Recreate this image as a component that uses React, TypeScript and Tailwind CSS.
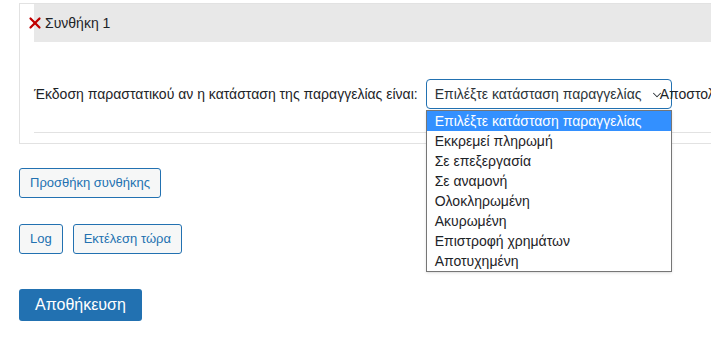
import { X, ChevronDown } from "lucide-react";

const statuses = [
  "Επιλέξτε κατάσταση παραγγελίας",
  "Εκκρεμεί πληρωμή",
  "Σε επεξεργασία",
  "Σε αναμονή",
  "Ολοκληρωμένη",
  "Ακυρωμένη",
  "Επιστροφή χρημάτων",
  "Αποτυχημένη",
];

export default function App() {
  return (
    <div
      className="w-[711px] h-[338px] overflow-hidden bg-white text-[#1d2327] text-[14px]"
      style={{ fontFamily: '"Liberation Sans", Arial, sans-serif' }}
    >
      <div className="pl-[19px] pt-[3px]">
        {/* Condition card */}
        <div className="w-[720px] border border-[#e2e2e2] pl-[14px] pb-[10px]">
          <div className="relative h-[38px] bg-[#e8e8e8] flex items-center pl-[11px]">
            <X className="absolute left-[-8px] top-[10px] w-[18px] h-[18px] text-[#c00000]" strokeWidth={3} />
            <span className="text-[14px] text-[#1d2327]">Συνθήκη 1</span>
          </div>
          <div className="flex items-center h-[90px] pt-[14px] whitespace-nowrap">
            <span className="mr-[8px]">Έκδοση παραστατικού αν η κατάσταση της παραγγελίας είναι:</span>
            <div className="relative shrink-0">
              <div className="relative w-[246px] h-[30px] border border-[#2271b1] rounded-[4px] flex items-center pl-[8px] text-[#2c3338] overflow-hidden">
                <span>Επιλέξτε κατάσταση παραγγελίας</span>
                <ChevronDown className="absolute right-[7px] top-[8px] w-[14px] h-[14px] text-[#2c3338]" strokeWidth={1.75} />
              </div>
              <ul className="absolute left-0 top-[31px] w-[246px] bg-white border border-[#767676] z-10 shadow-sm">
                {statuses.map((s, i) => (
                  <li
                    key={s}
                    className={`h-[20px] leading-[20px] pl-[8px] ${i === 0 ? "bg-[#3390ff] text-white" : "text-[#1d2327]"}`}
                  >
                    {s}
                  </li>
                ))}
              </ul>
            </div>
            <span className="ml-[-12px] relative">Αποστολή</span>
          </div>
          <div className="border-t border-[#e2e2e2]" />
        </div>

        {/* Actions */}
        <button className="mt-[24px] h-[30px] px-[10px] border border-[#2271b1] rounded-[3px] bg-[#f6f7f7] text-[#2271b1] text-[13px]">
          Προσθήκη συνθήκης
        </button>
        <div className="mt-[26px] flex gap-[10px]">
          <button className="h-[30px] px-[10px] border border-[#2271b1] rounded-[3px] bg-[#f6f7f7] text-[#2271b1] text-[13px]">
            Log
          </button>
          <button className="h-[30px] px-[10px] border border-[#2271b1] rounded-[3px] bg-[#f6f7f7] text-[#2271b1] text-[13px]">
            Εκτέλεση τώρα
          </button>
        </div>
        <button className="mt-[35px] h-[32px] px-[16px] rounded-[3px] bg-[#2271b1] text-white text-[16px]">
          Αποθήκευση
        </button>
      </div>
    </div>
  );
}
